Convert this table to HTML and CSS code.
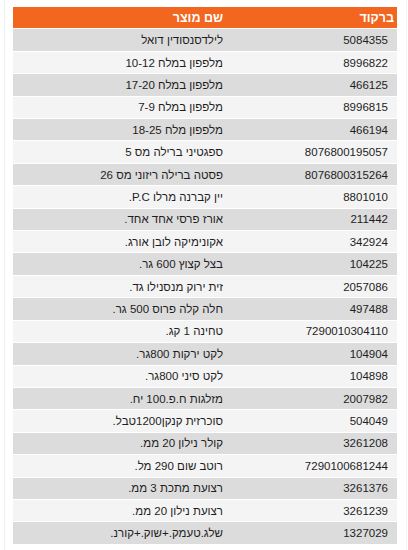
FILE: index.html
```html
<!DOCTYPE html>
<html lang="he" dir="rtl">
<head>
<meta charset="utf-8">
<link rel="stylesheet" href="styles.css">
</head>
<body>
<div class="frame">
  <div class="table">
    <div class="row head"><div class="code">ברקוד</div><div class="name">שם מוצר</div></div>
    <div class="row odd"><div class="code">5084355</div><div class="name">לילדסנסודין דואל</div></div>
    <div class="row even"><div class="code">8996822</div><div class="name">מלפפון במלח 10-12</div></div>
    <div class="row odd"><div class="code">466125</div><div class="name">מלפפון במלח 17-20</div></div>
    <div class="row even"><div class="code">8996815</div><div class="name">מלפפון במלח 7-9</div></div>
    <div class="row odd"><div class="code">466194</div><div class="name">מלפפון מלח 18-25</div></div>
    <div class="row even"><div class="code">8076800195057</div><div class="name">ספגטיני ברילה מס 5</div></div>
    <div class="row odd"><div class="code">8076800315264</div><div class="name">פסטה ברילה ריזוני מס 26</div></div>
    <div class="row even"><div class="code">8801010</div><div class="name">יין קברנה מרלו P.C.</div></div>
    <div class="row odd"><div class="code">211442</div><div class="name">אורז פרסי אחד אחד.</div></div>
    <div class="row even"><div class="code">342924</div><div class="name">אקונימיקה לובן אורג.</div></div>
    <div class="row odd"><div class="code">104225</div><div class="name">בצל קצוץ 600 גר.</div></div>
    <div class="row even"><div class="code">2057086</div><div class="name">זית ירוק מנסנילו גד.</div></div>
    <div class="row odd"><div class="code">497488</div><div class="name">חלה קלה פרוס 500 גר.</div></div>
    <div class="row even"><div class="code">7290010304110</div><div class="name">טחינה 1 קג.</div></div>
    <div class="row odd"><div class="code">104904</div><div class="name">לקט ירקות 800גר.</div></div>
    <div class="row even"><div class="code">104898</div><div class="name">לקט סיני 800גר.</div></div>
    <div class="row odd"><div class="code">2007982</div><div class="name">מזלגות ח.פ.100 יח.</div></div>
    <div class="row even"><div class="code">504049</div><div class="name">סוכרזית קנקן1200טבל.</div></div>
    <div class="row odd"><div class="code">3261208</div><div class="name">קולר נילון 20 ממ.</div></div>
    <div class="row even"><div class="code">7290100681244</div><div class="name">רוטב שום 290 מל.</div></div>
    <div class="row odd"><div class="code">3261376</div><div class="name">רצועת מתכת 3 ממ.</div></div>
    <div class="row even"><div class="code">3261239</div><div class="name">רצועת נילון 20 ממ.</div></div>
    <div class="row odd"><div class="code">1327029</div><div class="name">שלג.טעמק.+שוק.+קורנ.</div></div>
  </div>
</div>
</body>
</html>
```
FILE: styles.css
```css
html, body {
  margin: 0;
  padding: 0;
  background: #fff;
}
body {
  font-family: "Liberation Sans", Arial, sans-serif;
  color: #1e1e1e;
  width: 408px;
  height: 550px;
  overflow: hidden;
}
.frame {
  margin-left: 4px;
  margin-right: 1px;
  height: 550px;
  border-left: 1px solid #f1f1f1;
  border-right: 1px solid #f4f4f4;
  padding: 7px 9px 0 8px;
  box-sizing: border-box;
}
.table {
  width: 384px;
  display: flex;
  flex-direction: column;
}
.row {
  display: flex;
  flex-direction: row;
  height: 21.42px;
  border-bottom: 1px solid #fff;
  align-items: center;
  font-size: 11.5px;
}
.row > div {
  box-sizing: border-box;
  padding-right: 9px;
  text-align: right;
  white-space: nowrap;
}
.code {
  flex: 0 0 165px;
  width: 165px;
}
.name {
  flex: 1 1 auto;
}
.head {
  background: #f2661f;
  color: #fff;
  font-weight: bold;
  font-size: 12.5px;
}
.head .code {
  padding-right: 3px;
}
.odd {
  background: #dcdcdc;
}
.even {
  background: #f4f4f4;
}
```
